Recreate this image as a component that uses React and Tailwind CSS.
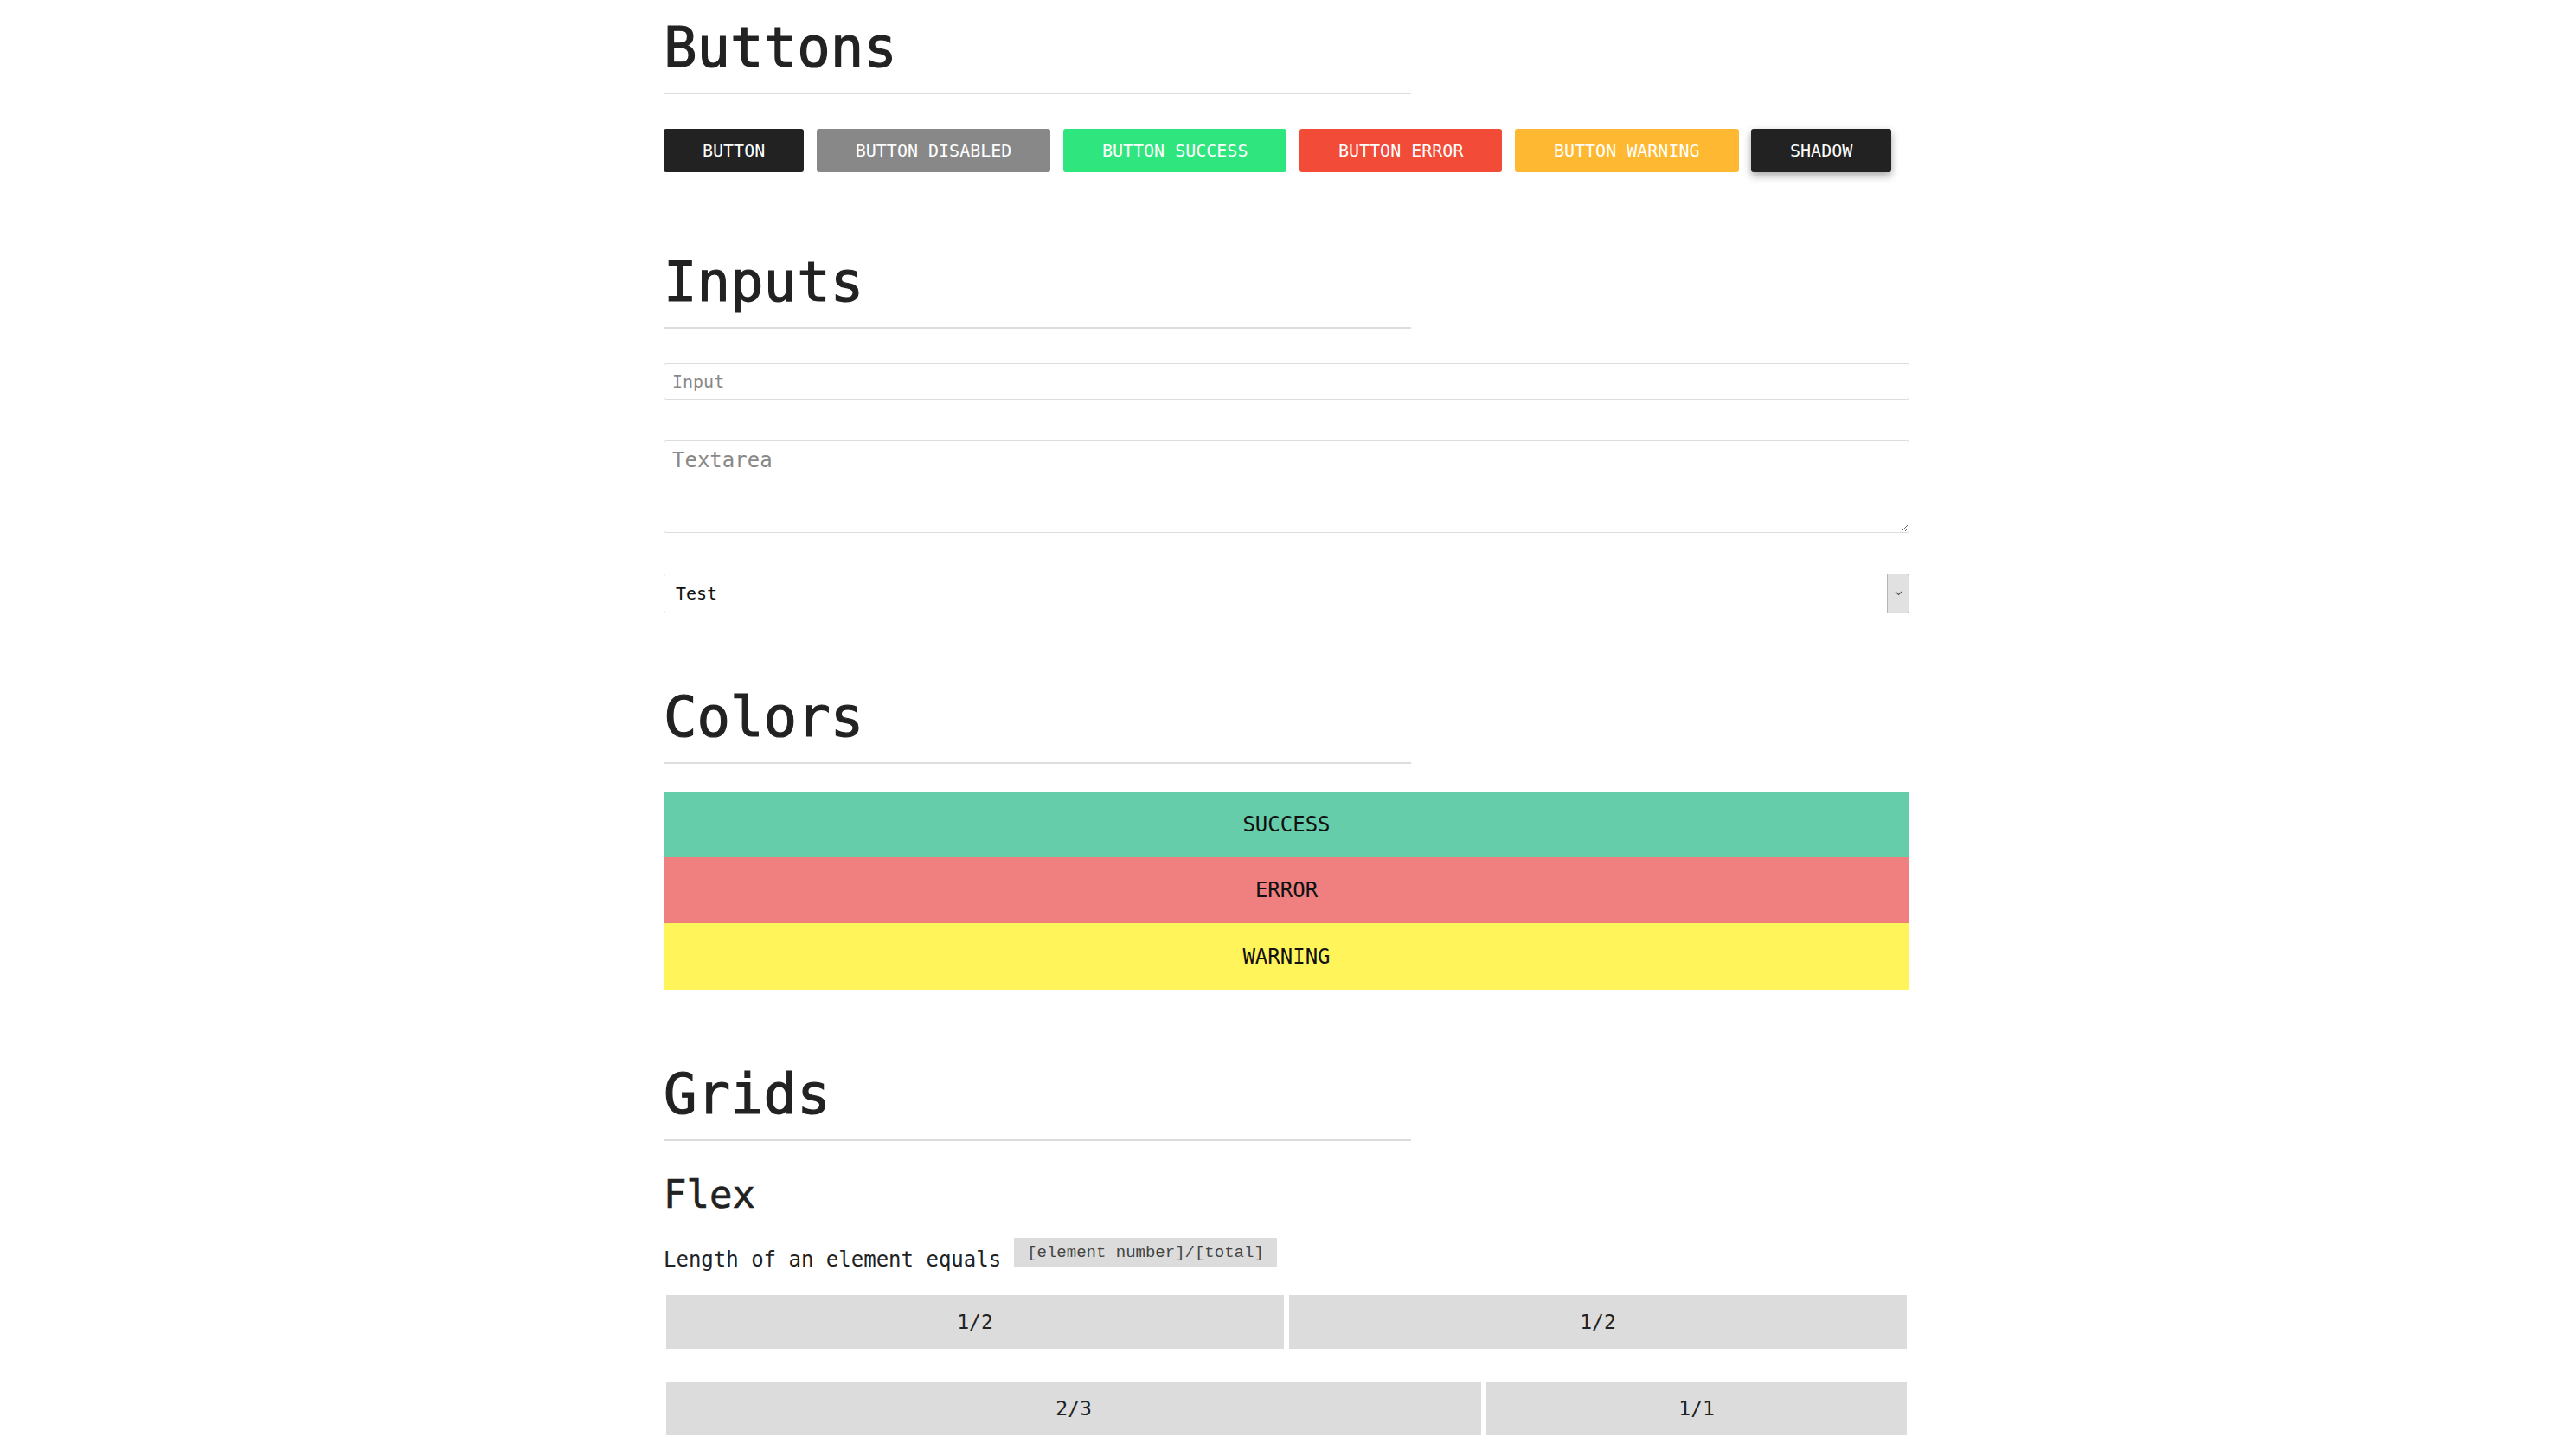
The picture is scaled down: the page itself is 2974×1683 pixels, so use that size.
import React from "react";

const mono = "font-['DejaVu_Sans_Mono','Liberation_Mono',monospace]";

const Heading = ({ children, className = "" }) => (
  <h1
    className={`w-[60%] border-b-2 border-[#dddddd] pb-[20px] text-[64px] leading-[64px] text-[#222] [-webkit-text-stroke:1.2px_#222] ${className}`}
  >
    {children}
  </h1>
);

const buttons = [
  { label: "BUTTON", cls: "bg-[#222222]" },
  { label: "BUTTON DISABLED", cls: "bg-[#888888]" },
  { label: "BUTTON SUCCESS", cls: "bg-[#2ee57e]" },
  { label: "BUTTON ERROR", cls: "bg-[#f24b37]" },
  { label: "BUTTON WARNING", cls: "bg-[#feb831]" },
  { label: "SHADOW", cls: "bg-[#222222] shadow-[0_4px_10px_rgba(0,0,0,0.35)]" },
];

const bands = [
  { label: "SUCCESS", cls: "bg-[#66cdaa] h-[76px]" },
  { label: "ERROR", cls: "bg-[#f08080] h-[76px]" },
  { label: "WARNING", cls: "bg-[#fff55a] h-[77px]" },
];

const Cell = ({ children, className = "" }) => (
  <div
    className={`flex h-[62px] items-center justify-center bg-[#dcdcdc] text-[23px] text-[#222] ${className}`}
  >
    {children}
  </div>
);

const App = () => {
  return (
    <div className={`min-h-screen bg-white ${mono}`}>
      <div className="mx-auto w-[1440px] pt-[23px] pb-[40px]">
        {/* Buttons */}
        <Heading>Buttons</Heading>
        <div className="mt-[40px] flex gap-[14.5px]">
          {buttons.map((b) => (
            <button
              key={b.label}
              className={`h-[50px] rounded-[3px] px-[45px] text-[20px] leading-none text-white ${b.cls}`}
            >
              {b.label}
            </button>
          ))}
        </div>

        {/* Inputs */}
        <Heading className="mt-[95px]">Inputs</Heading>
        <input
          placeholder="Input"
          className="mt-[40px] block h-[42px] w-full rounded-[3px] border border-[#dddddd] px-[9px] text-[20px] text-[#222] outline-none placeholder:text-[#888]"
        />
        <textarea
          placeholder="Textarea"
          className="mt-[47px] block h-[107px] w-full rounded-[3px] border border-[#dddddd] px-[9px] py-[8px] text-[24px] leading-[1.2] text-[#222] outline-none placeholder:text-[#888]"
        />
        <div className="relative mt-[47px] h-[46px] w-full">
          <select className="block h-full w-full appearance-none rounded-[3px] border border-[#dddddd] bg-white pl-[13px] text-[20px] text-[#111] outline-none">
            <option>Test</option>
          </select>
          <div className="pointer-events-none absolute right-0 top-0 flex h-full w-[26px] items-center justify-center rounded-r-[3px] border border-[#b5b5b5] bg-[#e1e1e1]">
            <svg width="9" height="6" viewBox="0 0 9 6" fill="none">
              <path d="M1 1l3.5 3.5L8 1" stroke="#555" strokeWidth="1.1" />
            </svg>
          </div>
        </div>

        {/* Colors */}
        <Heading className="mt-[88px]">Colors</Heading>
        <div className="mt-[32px] flex flex-col">
          {bands.map((b) => (
            <div
              key={b.label}
              className={`flex items-center justify-center text-[24px] text-[#111] ${b.cls}`}
            >
              {b.label}
            </div>
          ))}
        </div>

        {/* Grids */}
        <Heading className="mt-[89px]">Grids</Heading>
        <h2 className="mt-[40px] text-[44px] leading-[44px] text-[#222] [-webkit-text-stroke:0.6px_#222]">
          Flex
        </h2>
        <div className="mt-[28px] flex items-start gap-[15px]">
          <span className="mt-[8px] text-[24px] leading-[34px] text-[#222]">
            Length of an element equals
          </span>
          <code className="h-[34px] bg-[#dcdcdc] px-[15px] font-['Liberation_Mono',monospace] text-[19px] leading-[34px] text-[#444]">
            [element number]/[total]
          </code>
        </div>

        <div className="mx-[3px] mt-[24px] flex gap-[6px]">
          <Cell className="flex-1">1/2</Cell>
          <Cell className="flex-1">1/2</Cell>
        </div>
        <div className="mx-[3px] mt-[38px] flex gap-[6px]">
          <Cell className="basis-[65.7%] shrink-0">2/3</Cell>
          <Cell className="flex-1">1/1</Cell>
        </div>
      </div>
    </div>
  );
};

export default App;
